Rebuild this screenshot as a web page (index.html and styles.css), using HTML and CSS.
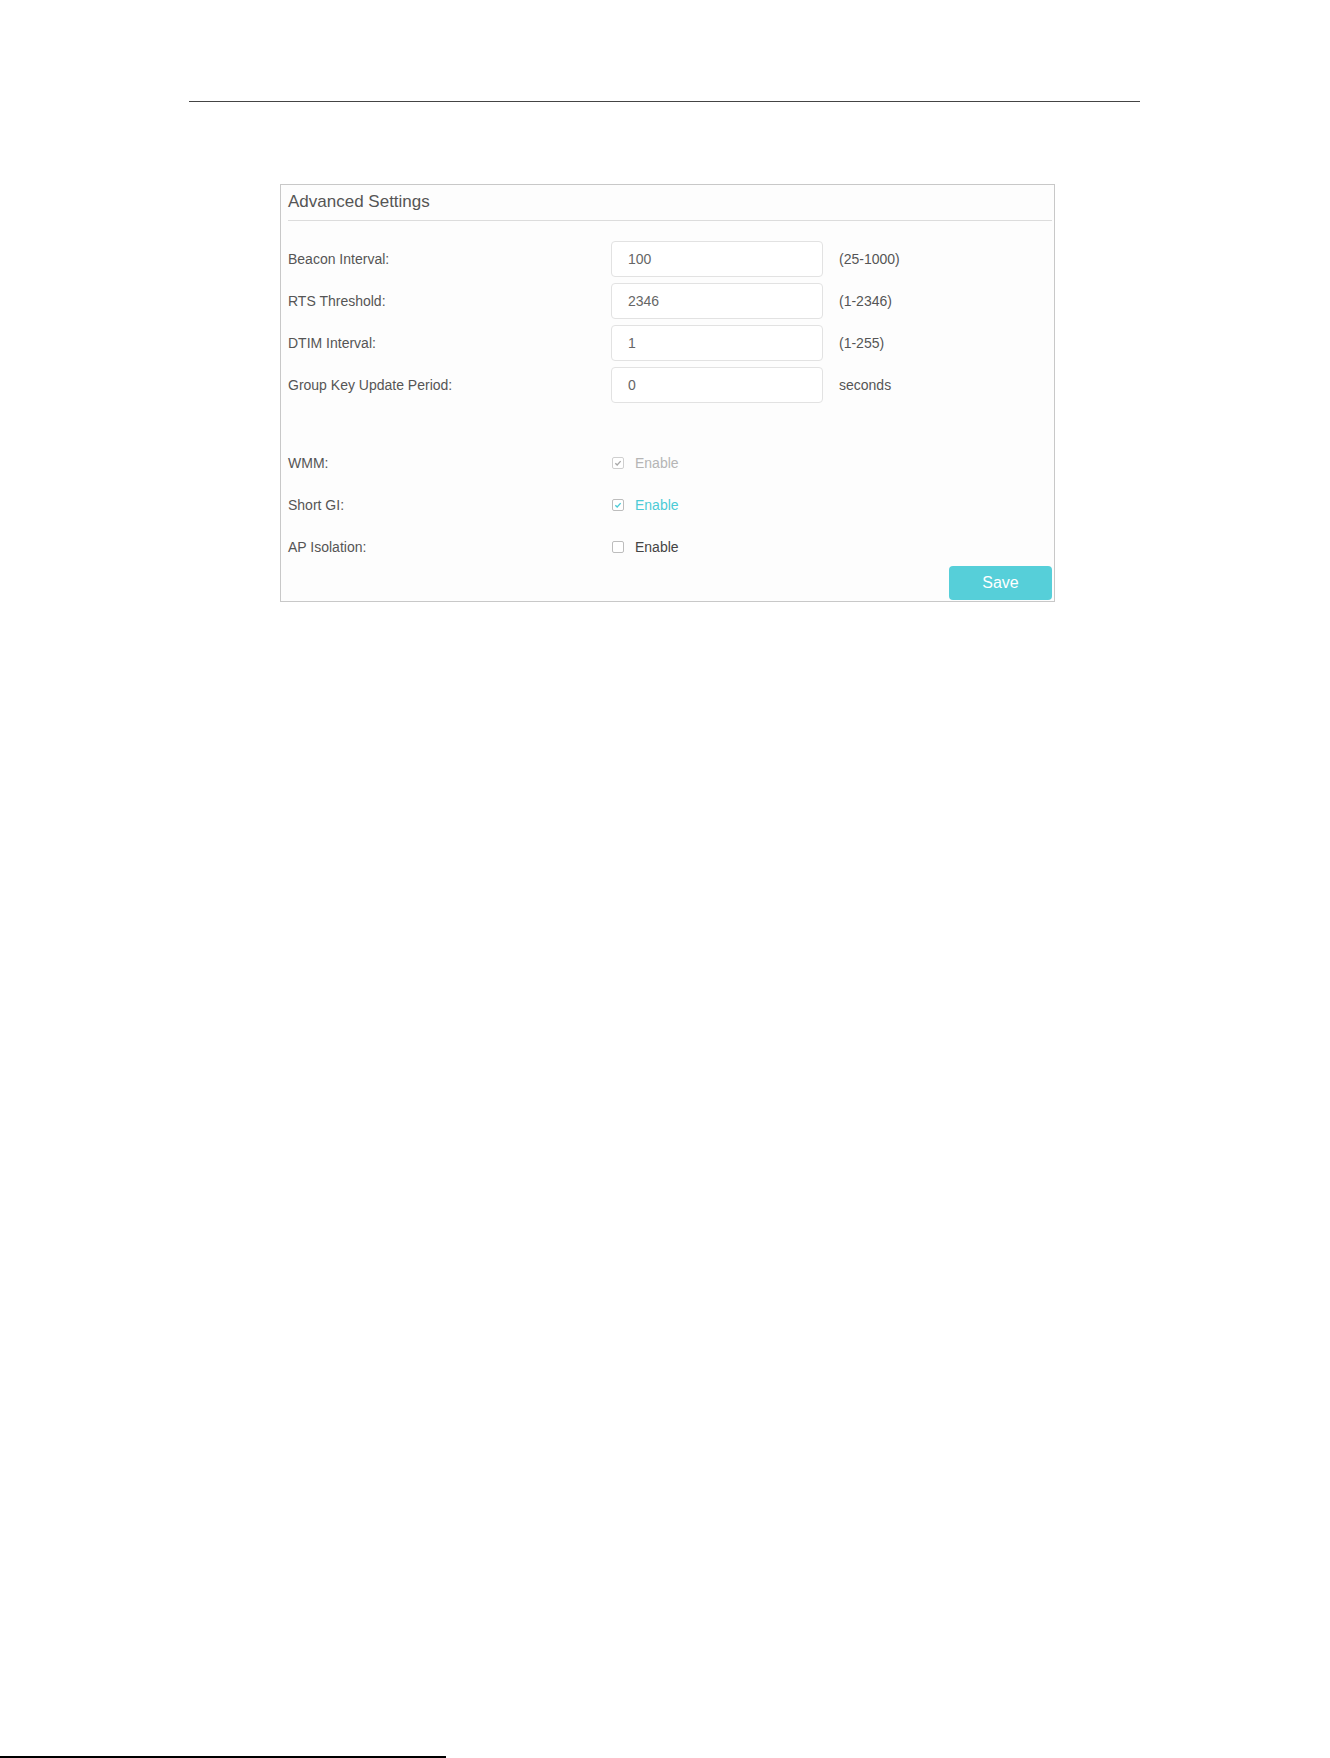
FILE: index.html
```html
<!DOCTYPE html>
<html lang="en">
<head>
    <meta charset="UTF-8">
    <meta name="viewport" content="width=device-width, initial-scale=1.0">
    <title>Advanced Settings</title>
    <link rel="stylesheet" href="styles.css">
</head>
<body>
    <div class="page">
        <hr class="top-rule">

        <section class="panel">
            <h2 class="panel-title">Advanced Settings</h2>

            <!-- Campos numericos -->
            <div class="fields">
                <label class="field-label" for="beacon">Beacon Interval:</label>
                <input class="field-input" id="beacon" type="text" value="100">
                <span class="field-unit">(25-1000)</span>

                <label class="field-label" for="rts">RTS Threshold:</label>
                <input class="field-input" id="rts" type="text" value="2346">
                <span class="field-unit">(1-2346)</span>

                <label class="field-label" for="dtim">DTIM Interval:</label>
                <input class="field-input" id="dtim" type="text" value="1">
                <span class="field-unit">(1-255)</span>

                <label class="field-label" for="gkup">Group Key Update Period:</label>
                <input class="field-input" id="gkup" type="text" value="0">
                <span class="field-unit">seconds</span>
            </div>

            <!-- Opciones on/off -->
            <div class="fields options">
                <span class="field-label">WMM:</span>
                <span class="check disabled">
                    <span class="box">
                        <svg viewBox="0 0 12 12" width="12" height="12"><path d="M2.8 6.2 L5 8.4 L9.2 3.8" fill="none" stroke="currentColor" stroke-width="1.6"/></svg>
                    </span>
                    Enable
                </span>

                <span class="field-label">Short GI:</span>
                <span class="check checked">
                    <span class="box">
                        <svg viewBox="0 0 12 12" width="12" height="12"><path d="M2.8 6.2 L5 8.4 L9.2 3.8" fill="none" stroke="currentColor" stroke-width="1.6"/></svg>
                    </span>
                    Enable
                </span>

                <span class="field-label">AP Isolation:</span>
                <span class="check">
                    <span class="box"></span>
                    Enable
                </span>
            </div>

            <div class="actions">
                <button class="btn-save">Save</button>
            </div>
        </section>

        <div class="bottom-rule"></div>
    </div>
</body>
</html>
```

FILE: styles.css
```css
body {
    margin: 0;
    background-color: #ffffff;
    font-family: 'Liberation Sans', Arial, sans-serif;
    color: #555;
}

.page {
    min-height: 1758px;
    display: flex;
    flex-direction: column;
}

.top-rule {
    margin: 101px 0 0 189px;
    width: 951px;
    height: 0;
    border: 0;
    border-top: 1px solid #444;
}

.panel {
    margin: 82px 0 0 280px;
    width: 775px;
    box-sizing: border-box;
    border: 1px solid #c8c8c8;
    background-color: #fdfdfd;
}

.panel-title {
    margin: 0 2px 0 7px;
    padding: 7px 0 8px;
    font-size: 17px;
    line-height: 20px;
    font-weight: normal;
    color: #555;
    border-bottom: 1px solid #dcdcdc;
}

.fields {
    display: grid;
    grid-template-columns: 323px 212px auto;
    grid-auto-rows: 36px;
    row-gap: 6px;
    align-items: center;
    margin: 20px 0 0 7px;
    font-size: 14px;
}

.options {
    grid-template-columns: 324px auto;
    margin-top: 42px;
}

.field-label {
    color: #555;
}

.field-input {
    width: 212px;
    height: 36px;
    box-sizing: border-box;
    border: 1px solid #e2e2e2;
    border-radius: 4px;
    padding: 0 16px;
    font-family: inherit;
    font-size: 14px;
    color: #666;
    background-color: #fff;
    outline: none;
}

.field-unit {
    padding-left: 16px;
    color: #555;
}

.check {
    display: flex;
    align-items: center;
    gap: 11px;
    color: #444;
}

.check .box {
    width: 12px;
    height: 12px;
    box-sizing: border-box;
    border: 1px solid #bdbdbd;
    border-radius: 2px;
    background-color: #fff;
    display: flex;
    align-items: center;
    justify-content: center;
}

.check .box svg {
    width: 10px;
    height: 10px;
}

.check.disabled {
    color: #b5b5b5;
}

.check.disabled .box {
    border-color: #cfcfcf;
    color: #a8a8a8;
}

.check.checked {
    color: #4ccbd6;
}

.check.checked .box {
    color: #4ccbd6;
}

.actions {
    display: flex;
    justify-content: flex-end;
    padding: 1px 2px 1px 0;
}

.btn-save {
    width: 103px;
    height: 34px;
    border: none;
    border-radius: 4px;
    background-color: #56cfd9;
    color: #fff;
    font-family: inherit;
    font-size: 16px;
    cursor: pointer;
}

.bottom-rule {
    margin-top: auto;
    width: 446px;
    border-top: 2px solid #000;
}
```
